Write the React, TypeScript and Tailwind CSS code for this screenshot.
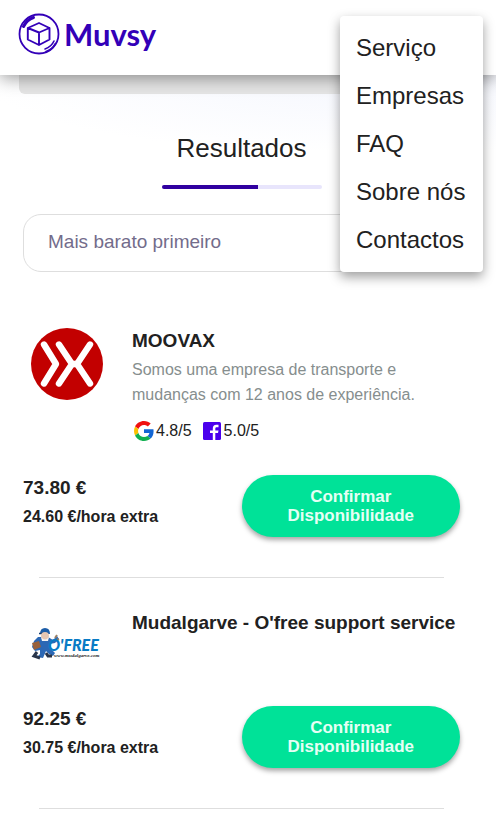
import type { ReactNode } from "react";

const menuItems = ["Serviço", "Empresas", "FAQ", "Sobre nós", "Contactos"];

function BrandIcon() {
  return (
    <svg viewBox="0 0 42 42" className="size-[42px]" fill="none" stroke="#3300b8" strokeLinecap="round" strokeLinejoin="round" aria-hidden="true">
      <circle cx="21" cy="21" r="19.5" strokeWidth="1.8" />
      <path d="M21 10 31.500 15V26.500L21 32 9.800 26.500V15Z M9.800 15 21 19.500 31.500 15 M21 19.500V32" strokeWidth="1.9" />
      <path d="M5.500 13.500C8 8.500 11 6 15.500 4.500" strokeWidth="3" />
      <path d="M36 28C34 32.500 31.500 34.500 27 36" strokeWidth="1.600" />
      <path d="M37.500 30.500C35 35 32 37.500 28 38.500" strokeWidth="1.600" />
    </svg>
  );
}

function MoovaxLogo() {
  return (
    <svg viewBox="0 0 72 72" className="size-[72px]" role="img" aria-label="Moovax">
      <circle cx="36" cy="36" r="36" fill="#c20000" />
      <g fill="none" stroke="#fff" strokeWidth="6.400" strokeLinecap="round" strokeLinejoin="round">
        <path d="M13 16.500 25 36 13 55.500" />
        <path d="M28 16.500 41 36 28 55.500" />
        <path d="M59 16.500 46 36 59 55.500" />
        <path d="M41 36H46" />
      </g>
    </svg>
  );
}

function OfreeLogo() {
  return (
    <svg viewBox="0 0 72 72" className="size-[72px]" role="img" aria-label="O'free">
      <path d="M7 27 3 31 1 37 4 41 9 40 9 44 6 47 12 48 15 41 18 44 22 46 24 43 20 39 19 34 24 33 28 29 26 26 22 30 17 27Z" fill="#2c68b5" />
      <path d="M9 24Q9 18 14 18Q19 18 19 24Z" fill="#1c5da8" />
      <path d="M8 23.500H15" stroke="#123b70" strokeWidth="1.500" />
      <circle cx="14" cy="26" r="4" fill="#e5c6b3" />
      <path d="M10 27Q14 32 18 27L17 31H11Z" fill="#f5f5f5" />
      <path d="M1 33 8 31 10 37 3 40Z" fill="#99613b" />
      <path d="M24 28 26 25M26 30 28 29" stroke="#9c8065" strokeWidth="2" />
      <path d="M6 42 3 46 9 48M15 43 17 46 21 46" fill="none" stroke="#28344a" strokeWidth="3" />
      <text x="17" y="41" fontFamily="Lato, sans-serif" fontSize="16" fontWeight="900" fontStyle="italic" fill="#087bc5">O'FREE</text>
      <text x="23" y="47" fontFamily="Liberation Serif, serif" fontSize="5" fontWeight="700" fontStyle="italic" fill="#222">www.mudalgarve.com</text>
    </svg>
  );
}

function GoogleIcon() {
  return (
    <svg viewBox="0 0 48 48" className="size-5" aria-hidden="true">
      <path fill="#f01010" d="M24 9.500c3.540 0 6.710 1.220 9.210 3.600l6.850-6.850C35.900 2.380 30.470 0 24 0 14.620 0 6.510 5.380 2.560 13.220l7.980 6.190C12.430 13.720 17.740 9.500 24 9.500z" />
      <path fill="#1266d4" d="M46.980 24.550c0-1.570-.15-3.090-.38-4.550H24v9.020h12.940c-.58 2.960-2.260 5.480-4.780 7.180l7.730 6c4.510-4.180 7.090-10.360 7.090-17.650z" />
      <path fill="#fbc000" d="M10.530 28.590c-.48-1.450-.76-2.990-.76-4.590s.27-3.140.76-4.590l-7.980-6.190C.92 16.460 0 20.120 0 24c0 3.880.92 7.540 2.560 10.780l7.970-6.190z" />
      <path fill="#10b050" d="M24 48c6.480 0 11.930-2.130 15.890-5.810l-7.730-6c-2.150 1.450-4.920 2.300-8.160 2.300-6.260 0-11.570-4.220-13.470-9.910l-7.980 6.190C6.510 42.620 14.620 48 24 48z" />
    </svg>
  );
}

function FacebookIcon() {
  return (
    <svg viewBox="0 0 18 18" className="size-[18px]" aria-hidden="true">
      <rect width="18" height="18" rx="1.500" fill="#4b00ed" />
      <path d="M9.800 18V11H7V8.500H9.800V6.500C9.800 4.200 11 2.800 13.300 2.800H15.500V5.300H14C12.900 5.300 12.300 5.700 12.300 6.700V8.500H15.500L15 11H12.300V18Z" fill="#fff" />
    </svg>
  );
}

type CompanyProps = { logo: ReactNode; name: string; price: string; extra: string; children?: ReactNode };

function Company({ logo, name, price, extra, children }: CompanyProps) {
  return (
    <article>
      <div className="mb-6 flex pl-2">
        <div className="mr-[29px] shrink-0">{logo}</div>
        <div className="min-w-0">
          <h3 className="text-[19px] leading-[25px] font-bold whitespace-nowrap">{name}</h3>
          {children}
        </div>
      </div>
      <div className="grid grid-cols-2">
        <div className="font-bold">
          <p className="text-[19px] leading-[26px]">{price}</p>
          <p className="mt-1 text-base leading-6">{extra}</p>
        </div>
        <button type="button" className="flex h-[62px] items-center justify-center rounded-full bg-[#00e298] px-10 text-[17px] leading-[19px] font-bold text-[#e5fff5] shadow-[0_3px_5px_rgba(0,0,0,0.35)]">
          Confirmar<br />Disponibilidade
        </button>
      </div>
      <hr className="mx-4 mt-10 mb-8 border-[#dedede]" />
    </article>
  );
}

export default function App() {
  return (
    <div className="relative overflow-x-hidden bg-white font-['Liberation_Sans',Arial,sans-serif] text-[#212121]">
      <header className="relative z-10 flex h-[75px] items-start bg-white pt-[13px] pl-[18px] shadow-[0_3px_16px_rgba(0,0,0,0.4)]">
        <a href="#" className="flex items-center text-[#3300b8]">
          <BrandIcon />
          <span className="ml-1 font-['Lato',sans-serif] text-[31px] leading-[42px] font-bold">Muvsy</span>
        </a>
      </header>
      <nav aria-label="Principal" className="absolute top-4 right-[13px] z-20 w-[143px] rounded bg-white py-2 shadow-[0_5px_12px_rgba(0,0,0,0.38)]">
        <ul>
          {menuItems.map((item) => (
            <li key={item}>
              <a href="#" className="block px-4 text-2xl leading-[48px] whitespace-nowrap">{item}</a>
            </li>
          ))}
        </ul>
      </nav>
      <main className="bg-[radial-gradient(ellipse_at_75%_0,#f5f7fe_0,#fff_75%)] bg-[length:100%_75px] bg-no-repeat pr-9 pl-[23px]">
        <div className="-mx-1 h-[19px] rounded-b-md bg-[#e5e5e5]" />
        <h2 className="mt-9 text-center text-[26px] leading-9">Resultados</h2>
        <div className="mx-auto mt-[19px] h-1 w-40 overflow-hidden rounded-full bg-[#e8e5fc]">
          <div className="h-full w-3/5 bg-[#3000a0]" />
        </div>
        <select aria-label="Ordenar resultados" className="mt-[25px] mb-14 block h-[58px] w-full appearance-none rounded-[18px] border border-[#dedede] bg-white px-6 pb-0.5 text-[19px] text-[#736c8b]">
          <option>Mais barato primeiro</option>
        </select>
        <Company logo={<MoovaxLogo />} name="MOOVAX" price="73.80 €" extra="24.60 €/hora extra">
          <p className="mt-1 text-base leading-[25px] text-[#868e8e]">Somos uma empresa de transporte e mudanças com 12 anos de experiência.</p>
          <div className="mt-3 mb-2 flex h-6 items-center text-base">
            <span className="flex items-center gap-0.5 pl-0.5"><GoogleIcon />4.8/5</span>
            <span className="ml-[11px] flex items-center gap-[3px]"><FacebookIcon />5.0/5</span>
          </div>
        </Company>
        <Company logo={<OfreeLogo />} name="Mudalgarve - O'free support service" price="92.25 €" extra="30.75 €/hora extra" />
      </main>
    </div>
  );
}
